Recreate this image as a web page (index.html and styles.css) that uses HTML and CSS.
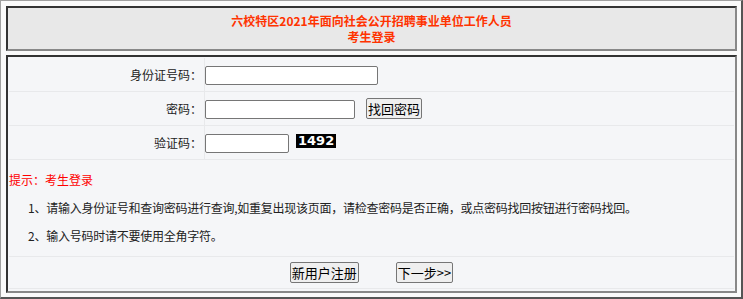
FILE: index.html
```html
<!DOCTYPE html>
<html lang="zh-CN">
<head>
  <meta charset="UTF-8" />
  <title>考生登录</title>
  <link rel="stylesheet" href="styles.css">
</head>
<body>
  <div class="pagina">
    <div class="cabecalho">
      <div>六校特区2021年面向社会公开招聘事业单位工作人员</div>
      <div>考生登录</div>
    </div>

    <form class="caixa">
      <div class="linha">
        <label class="rotulo">身份证号码：</label>
        <div class="campo"><input type="text" class="ent ent-longa"></div>
      </div>
      <div class="linha">
        <label class="rotulo">密码：</label>
        <div class="campo">
          <input type="password" class="ent ent-media">
          <button type="button" class="btn btn-achar">找回密码</button>
        </div>
      </div>
      <div class="linha">
        <label class="rotulo">验证码：</label>
        <div class="campo">
          <input type="text" class="ent ent-curta">
          <span class="captcha">1492</span>
        </div>
      </div>

      <div class="dicas">
        <p class="aviso">提示：考生登录</p>
        <p class="item">1、请输入身份证号和查询密码进行查询,如重复出现该页面，请检查密码是否正确，或点密码找回按钮进行密码找回。</p>
        <p class="item">2、输入号码时请不要使用全角字符。</p>
      </div>

      <div class="acoes">
        <button type="button" class="btn">新用户注册</button>
        <button type="button" class="btn">下一步&gt;&gt;</button>
      </div>
    </form>
  </div>
</body>
</html>
```

FILE: styles.css
```css
body {
  margin: 0;
  font-family: "Noto Sans CJK SC", "Liberation Sans", sans-serif;
  font-size: 12px;
  color: #222;
  background-color: #fafafa;
}

.pagina {
  box-sizing: border-box;
  width: 743px;
  height: 299px;
  padding: 5px 4px 4px 5px;
  border-top: 1px solid #a0a0a0;
  border-left: 1px solid #a0a0a0;
  border-right: 2px solid #555;
  border-bottom: 2px solid #555;
  display: flex;
  flex-direction: column;
  gap: 4px;
}

.cabecalho {
  background-color: #e8e8e8;
  border-top: 2px solid #333;
  border-left: 2px solid #333;
  border-right: 2px solid #888;
  border-bottom: 2px solid #888;
  padding: 5px 0 4px;
  text-align: center;
  color: #ff3300;
  font-weight: bold;
  font-size: 12px;
  line-height: 16px;
}

.caixa {
  margin: 0;
  flex: 1;
  background-color: #f5f6f8;
  border-top: 2px solid #333;
  border-left: 2px solid #333;
  border-right: 2px solid #888;
  border-bottom: 2px solid #888;
  padding: 1px;
  display: flex;
  flex-direction: column;
}

.linha {
  display: grid;
  grid-template-columns: 196px 1fr;
  height: 33px;
  border-bottom: 1px solid #e8e9eb;
}

.rotulo {
  display: flex;
  align-items: center;
  justify-content: flex-end;
  padding-right: 2px;
  border-right: 1px solid #e8e9eb;
  font-size: 12px;
}

.campo {
  display: flex;
  align-items: center;
  gap: 11px;
}

.ent {
  box-sizing: border-box;
  height: 19px;
  margin: 0;
  border: 1px solid #767676;
  border-radius: 2px;
  background: #fff;
  position: relative;
  top: 1px;
}

.ent-longa { width: 173px; }
.ent-media { width: 150px; }
.ent-curta { width: 84px; margin-right: -4px; }

.captcha {
  background: #000;
  color: #fff;
  font-family: "DejaVu Sans", sans-serif;
  font-weight: bold;
  font-size: 13px;
  line-height: 14px;
  padding: 0 2px;
  position: relative;
  top: -2px;
}

.btn {
  box-sizing: border-box;
  height: 21px;
  padding: 0 1px;
  border: 1px solid #767676;
  border-radius: 2px;
  background-color: #efefef;
  font-family: "Noto Sans CJK SC", sans-serif;
  font-size: 13px;
  line-height: 17px;
  color: #000;
}

.dicas {
  height: 96px;
  border-bottom: 1px solid #e8e9eb;
}

.dicas p {
  margin: 0;
  line-height: 28px;
}

.aviso {
  color: #f00;
  padding-top: 6px;
  font-size: 12px;
}

.item {
  padding-left: 19px;
  font-size: 12px;
  letter-spacing: -0.25px;
}

.acoes {
  height: 31px;
  display: flex;
  justify-content: center;
  align-items: center;
  gap: 37px;
  border-bottom: 1px solid #e8e9eb;
}
```
